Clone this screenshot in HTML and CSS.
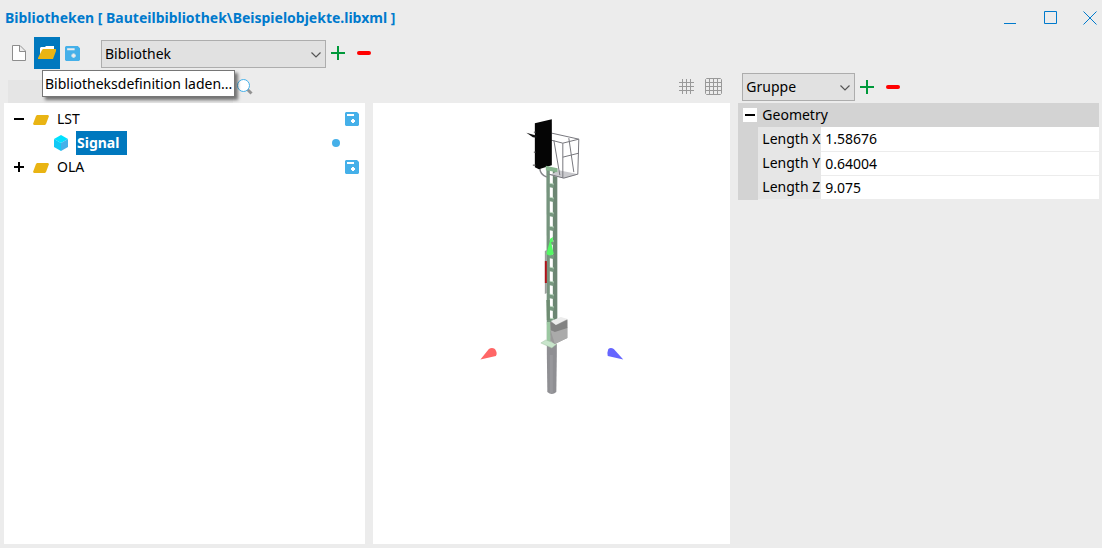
FILE: index.html
```html
<!DOCTYPE html>
<html lang="de">
<head>
<meta charset="utf-8">
<title>Bibliotheken</title>
<link rel="stylesheet" href="styles.css">
</head>
<body>
<svg class="symbols" aria-hidden="true">
  <symbol id="disk" viewBox="0 0 14 14"><path fill="#45b0e9" fill-rule="evenodd" d="M1 0H12L14 2V13L13 14H1L0 13V1ZM2 2V4H9V2ZM7 7V8H6V10H7V11H9V10H10V8H9V7Z"/></symbol>
  <symbol id="folder" viewBox="0 0 16 11"><path fill="#e9b413" d="M4 0H15L16 1L13 9L12 10H1L0 9L3 1Z"/></symbol>
  <symbol id="plus" viewBox="0 0 14 14"><path fill="#00993a" d="M6 0H8V6H14V8H8V14H6V8H0V6H6Z"/></symbol>
  <symbol id="minus" viewBox="0 0 14 14"><rect y="5" width="14" height="4" rx="2" fill="#f00"/></symbol>
  <symbol id="chevron" viewBox="0 0 10 6"><path fill="none" stroke="#555" stroke-width="1.2" d="M.5 .5L5 5L9.500 .5"/></symbol>
</svg>
<div class="window">
  <header class="titlebar">
    <h1 class="title">Bibliotheken [ Bauteilbibliothek\Beispielobjekte.libxml ]</h1>
    <div class="window-controls">
      <button type="button" aria-label="Minimieren"><svg viewBox="0 0 14 14"><path d="M1 12.5H13"/></svg></button>
      <button type="button" aria-label="Maximieren"><svg viewBox="0 0 14 14"><path d="M1.500 .5H13.500V12.500H1.500Z"/></svg></button>
      <button type="button" aria-label="Schließen"><svg viewBox="0 0 14 14"><path d="M.5 .5L13.500 13.500M13.500 .5L.5 13.500"/></svg></button>
    </div>
  </header>

  <div class="toolbar">
    <button type="button" class="tool" aria-label="Neu"><svg width="14" height="16" viewBox="0 0 14 16"><path fill="#fff" stroke="#8d8d8d" d="M.5 .5H8L13.500 6V15.500H.5ZM7.500 .5V6.500H13.500"/></svg></button>
    <button type="button" class="tool tool-active" aria-describedby="load-tip" aria-label="Laden"><svg width="18" height="14" viewBox="0 0 18 14"><path fill="#fff" d="M2 2L3 1H7L8 0H16V9H2Z"/><path fill="#e9b413" d="M5 3H18V5L15 13H0V12L4 4Z"/></svg></button>
    <button type="button" class="tool" aria-label="Speichern"><svg width="15" height="15"><use href="#disk"/></svg></button>
    <div class="combo combo-library"><select aria-label="Bibliothek"><option>Bibliothek</option></select><svg width="10" height="6"><use href="#chevron"/></svg></div>
    <button type="button" class="tool" aria-label="Hinzufügen"><svg width="14" height="14"><use href="#plus"/></svg></button>
    <button type="button" class="tool" aria-label="Entfernen"><svg width="14" height="14"><use href="#minus"/></svg></button>
    <div class="tooltip" id="load-tip" role="tooltip">Bibliotheksdefinition laden...</div>
  </div>

  <main class="columns">
    <section class="column">
      <div class="column-bar search-bar">
        <input class="search" type="text" aria-label="Suche">
        <button type="button" class="icon-button" aria-label="Suchen"><svg width="16" height="16" viewBox="0 0 16 16"><path stroke="#929292" stroke-width="3" d="M10.500 10.500L14.500 14.500"/><circle cx="6.500" cy="6.500" r="6" fill="#fff" stroke="#45b0e9"/></svg></button>
      </div>
      <div class="panel tree">
        <div class="tree-row">
          <button type="button" class="toggle" aria-label="LST zuklappen"><svg width="10" height="10" viewBox="0 0 10 10"><path stroke="#000" stroke-width="2" d="M0 5H10"/></svg></button>
          <svg class="folder" width="16" height="11"><use href="#folder"/></svg>
          <span class="node">LST</span>
          <button type="button" class="icon-button row-end" aria-label="LST speichern"><svg width="14" height="14"><use href="#disk"/></svg></button>
        </div>
        <div class="tree-row tree-child">
          <svg width="14" height="16" viewBox="0 0 14 16"><path fill="#00e1ff" d="M7 0L14 4L7 8L0 4Z"/><path fill="#11c9f5" d="M0 4L7 8V16L0 12Z"/><path fill="#45b0e9" d="M14 4L7 8V16L14 12Z"/></svg>
          <span class="node node-selected">Signal</span>
          <span class="dot row-end"></span>
        </div>
        <div class="tree-row">
          <button type="button" class="toggle" aria-label="OLA aufklappen"><svg width="10" height="10" viewBox="0 0 10 10"><path stroke="#000" stroke-width="2" d="M0 5H10M5 0V10"/></svg></button>
          <svg class="folder" width="16" height="11"><use href="#folder"/></svg>
          <span class="node">OLA</span>
          <button type="button" class="icon-button row-end" aria-label="OLA speichern"><svg width="14" height="14"><use href="#disk"/></svg></button>
        </div>
      </div>
    </section>

    <section class="column">
      <div class="column-bar view-bar">
        <button type="button" class="icon-button" aria-label="Raster"><svg width="16" height="16" viewBox="0 0 16 16"><path stroke="#999" d="M0 3.500H15M0 7.500H15M0 11.500H15M3.500 0V15M7.500 0V15M11.500 0V15"/></svg></button>
        <button type="button" class="icon-button" aria-label="Raster mit Rahmen"><svg width="17" height="17" viewBox="0 0 17 17"><path fill="none" stroke="#999" d="M1.500 .5H15.500L16.500 1.500V15.500L15.500 16.500H1.500L.5 15.500V1.500ZM.5 4.500H16.500M.5 8.500H16.500M.5 12.500H16.500M4.500 .5V16.500M8.500 .5V16.500M12.500 .5V16.500"/></svg></button>
      </div>
      <div class="panel view">
        <svg viewBox="373 103 358 441" role="img" aria-label="Signal">
          <!-- foundation post -->
          <path fill="#8f8f93" d="M547 344H557V354L556.500 392Q552 396 547.500 392L547 354Z"/>
          <path fill="#98989c" d="M550 355H553V393H550Z"/>
          <!-- lattice mast -->
          <path fill="#6c8673" d="M553 168H557.500V322L557 343H553Z"/>
          <path fill="#76947e" d="M546.500 169H550V343H547Z"/>
          <path stroke="#789880" stroke-width="4" d="M549 185L554 186M549 199L554 200M549 214L554 215M549 228L554 229M549 242L554 243M549 256L554 257M549 269L554 270M549 283L554 284M549 296L554 297M549 308L554 309M549 320L554 321M549 333L554 334"/>
          <path stroke="#c1dcc5" d="M550 183L554 184M550 197L554 198M550 212L554 213M550 226L554 227M550 240L554 241M550 267L554 268M550 281L554 282M550 294L554 295M550 306L554 307M550 318L554 319"/>
          <path fill="#6e8c72" d="M546.500 300H550V320H547Z"/>
          <path fill="#9bc8a1" d="M547 322H551V342H547Z"/>
          <path fill="#c8e5cb" stroke="#a1bfa4" stroke-width=".5" d="M541 343L546 340L557 344L552 348Z"/>
          <!-- side plate -->
          <path fill="#9a9f9b" d="M545 251L547 250V293L545 294Z"/>
          <path fill="#ad1318" d="M545 261H547V283H545Z"/>
          <!-- cabinet -->
          <path fill="#999" d="M550.500 322L567.500 319V338L555 344L550.500 341Z"/>
          <path fill="#aaa" d="M551 331L567.500 327V338L555 344Z"/>
          <path fill="#828282" d="M550.500 322L557 325L567.500 320V328L555 332L551 330Z"/>
          <path fill="#ececec" d="M551 321L561 317L568 319L556 325Z"/>
          <!-- working cage -->
          <path fill="#cacace" d="M550 175L559 170L579 174L564 178Z"/>
          <path fill="none" stroke="#77777d" d="M536 136L563 143L579 139L552 133M563 143V178M579 139L578 174L564 178L549 174M554 140L560 175M569 138L574 172M563 157L579 153"/>
          <path fill="none" stroke="#85858a" stroke-width="1.500" d="M540 168Q540 174 547 177"/>
          <!-- signal screen -->
          <path fill="#050505" d="M535 123L552 119V165L539 169L535 167Z"/>
          <path fill="#111" d="M526.500 132.500L537 135.500V137.500L533 137Z"/>
          <path stroke="#444" d="M534 132H536M534 152H536M533 165H536"/>
          <path fill="#87b68e" d="M546 165.500L557.500 168V172L546 170Z"/>
          <!-- axis handles -->
          <path fill="#55f865" d="M550 241H551L554 254Q550 257 546.500 254ZM550 239L553 237V242H550Z"/>
          <path fill="#ff6666" d="M480.500 359.500L489 349Q492 347 495 349Q498 353 496 356Z"/>
          <path fill="#6666ff" d="M623.500 359.500L614 349Q611 347 608.500 349Q607 353 608 356Z"/>
        </svg>
      </div>
    </section>

    <section class="column">
      <div class="column-bar group-bar">
        <div class="combo combo-group"><select aria-label="Gruppe"><option>Gruppe</option></select><svg width="10" height="6"><use href="#chevron"/></svg></div>
        <button type="button" class="tool" aria-label="Gruppe hinzufügen"><svg width="14" height="14"><use href="#plus"/></svg></button>
        <button type="button" class="tool" aria-label="Gruppe entfernen"><svg width="14" height="14"><use href="#minus"/></svg></button>
      </div>
      <div class="properties">
        <div class="properties-head">
          <button type="button" class="collapse" aria-label="Geometry zuklappen"><svg width="10" height="2"><rect width="10" height="2"/></svg></button>
          <span>Geometry</span>
        </div>
        <table class="properties-table">
          <tr><th scope="row"><label for="lx">Length X</label></th><td><input id="lx" type="text" value="1.58676"></td></tr>
          <tr><th scope="row"><label for="ly">Length Y</label></th><td><input id="ly" type="text" value="0.64004"></td></tr>
          <tr><th scope="row"><label for="lz">Length Z</label></th><td><input id="lz" type="text" value="9.075"></td></tr>
        </table>
      </div>
    </section>
  </main>
</div>
</body>
</html>
```
FILE: styles.css
```css
* { box-sizing: border-box; }

body {
  margin: 0;
  background: #ececec;
  color: #000;
  font: 14px/20px "Noto Sans", "Open Sans", sans-serif;
}

button, input, select {
  margin: 0;
  padding: 0;
  border: 0;
  border-radius: 0;
  background: none;
  color: inherit;
  font: inherit;
}

svg { display: block; flex: none; }

.symbols { position: absolute; width: 0; height: 0; }

.window {
  display: flex;
  flex-direction: column;
  min-height: 100vh;
  padding: 0 3px 4px 4px;
}

.titlebar {
  display: flex;
  justify-content: space-between;
  align-items: center;
  height: 36px;
  padding-left: 1px;
}

.title {
  margin: 0;
  color: #007acc;
  font-size: 14px;
  font-weight: 700;
}

.window-controls { display: flex; gap: 26px; padding-right: 2px; }
.window-controls svg { width: 14px; height: 14px; fill: none; stroke: #007acc; }

.toolbar {
  position: relative;
  display: flex;
  align-items: center;
  height: 34px;
  padding-left: 2px;
}

.tool {
  display: flex;
  align-items: center;
  justify-content: center;
  width: 26px;
  height: 32px;
}

.tool:first-child { width: 28px; padding-right: 2px; }
.tool-active { background: #0078be; }
.tool-active + .tool { width: 25px; }
.combo + .tool { margin-left: -1px; }

.combo { position: relative; margin-bottom: -2px; }
.combo select {
  display: block;
  appearance: none;
  width: 100%;
  height: 28px;
  padding: 0 24px 0 3px;
  border: 1px solid #adadad;
  background: #e1e1e1;
}
.combo svg { position: absolute; right: 5px; top: 12px; pointer-events: none; }
.combo-library { width: 225px; margin-left: 16px; }
.combo-group { width: 113px; margin-bottom: -1px; }

.tooltip {
  position: absolute;
  left: 38px;
  top: 34px;
  z-index: 1;
  height: 27px;
  padding: 3px 2px;
  border: 1px solid #767676;
  background: #fff;
  box-shadow: 3px 3px 3px rgba(0, 0, 0, 0.5);
  white-space: nowrap;
}

.columns {
  flex: 1;
  display: grid;
  grid-template-columns: 361fr 358fr 361fr;
  gap: 8px 7px;
  column-gap: 8px;
}

.column { display: flex; flex-direction: column; min-width: 0; }
.column-bar { display: flex; align-items: center; height: 33px; }

.search-bar { gap: 4px; padding-left: 4px; }
.search { align-self: flex-end; width: 225px; height: 23px; background: #e5e5e5; }

.view-bar { justify-content: flex-end; gap: 10px; padding-right: 8px; }
.group-bar { padding-left: 4px; }

.panel { flex: 1; background: #fff; }

.tree { padding: 4px 6px 4px 10px; }
.tree-row { display: flex; align-items: center; height: 24px; }
.toggle { margin-right: 9px; }
.folder { margin: 3px 8px 0 0; }
.tree-child { padding: 0 19px 0 40px; }
.node-selected {
  margin-left: 8px;
  padding: 2px 8px 2px 1px;
  background: #0078be;
  color: #fff;
  font-weight: 700;
}
.row-end { margin-left: auto; }
.dot { width: 8px; height: 8px; border-radius: 50%; background: #45b0e9; }

.view { display: flex; }
.view svg { flex: 1; width: 100%; min-width: 0; }

.properties { border-left: 20px solid #d3d3d3; }
.properties-head {
  display: flex;
  align-items: center;
  gap: 5px;
  height: 24px;
  margin-left: -15px;
  background: #d3d3d3;
}
.collapse {
  display: flex;
  align-items: center;
  justify-content: center;
  width: 14px;
  height: 14px;
  background: #fff;
}
.properties-table { width: 100%; border-collapse: collapse; }
.properties-table th {
  width: 63px;
  height: 24px;
  padding: 0 0 0 4px;
  background: #e6e6e6;
  font-weight: 400;
  text-align: left;
  white-space: nowrap;
}
.properties-table td { padding: 0; border-bottom: 1px solid #ececec; background: #fff; }
.properties-table input { display: block; width: 100%; height: 23px; padding-left: 4px; }
```
